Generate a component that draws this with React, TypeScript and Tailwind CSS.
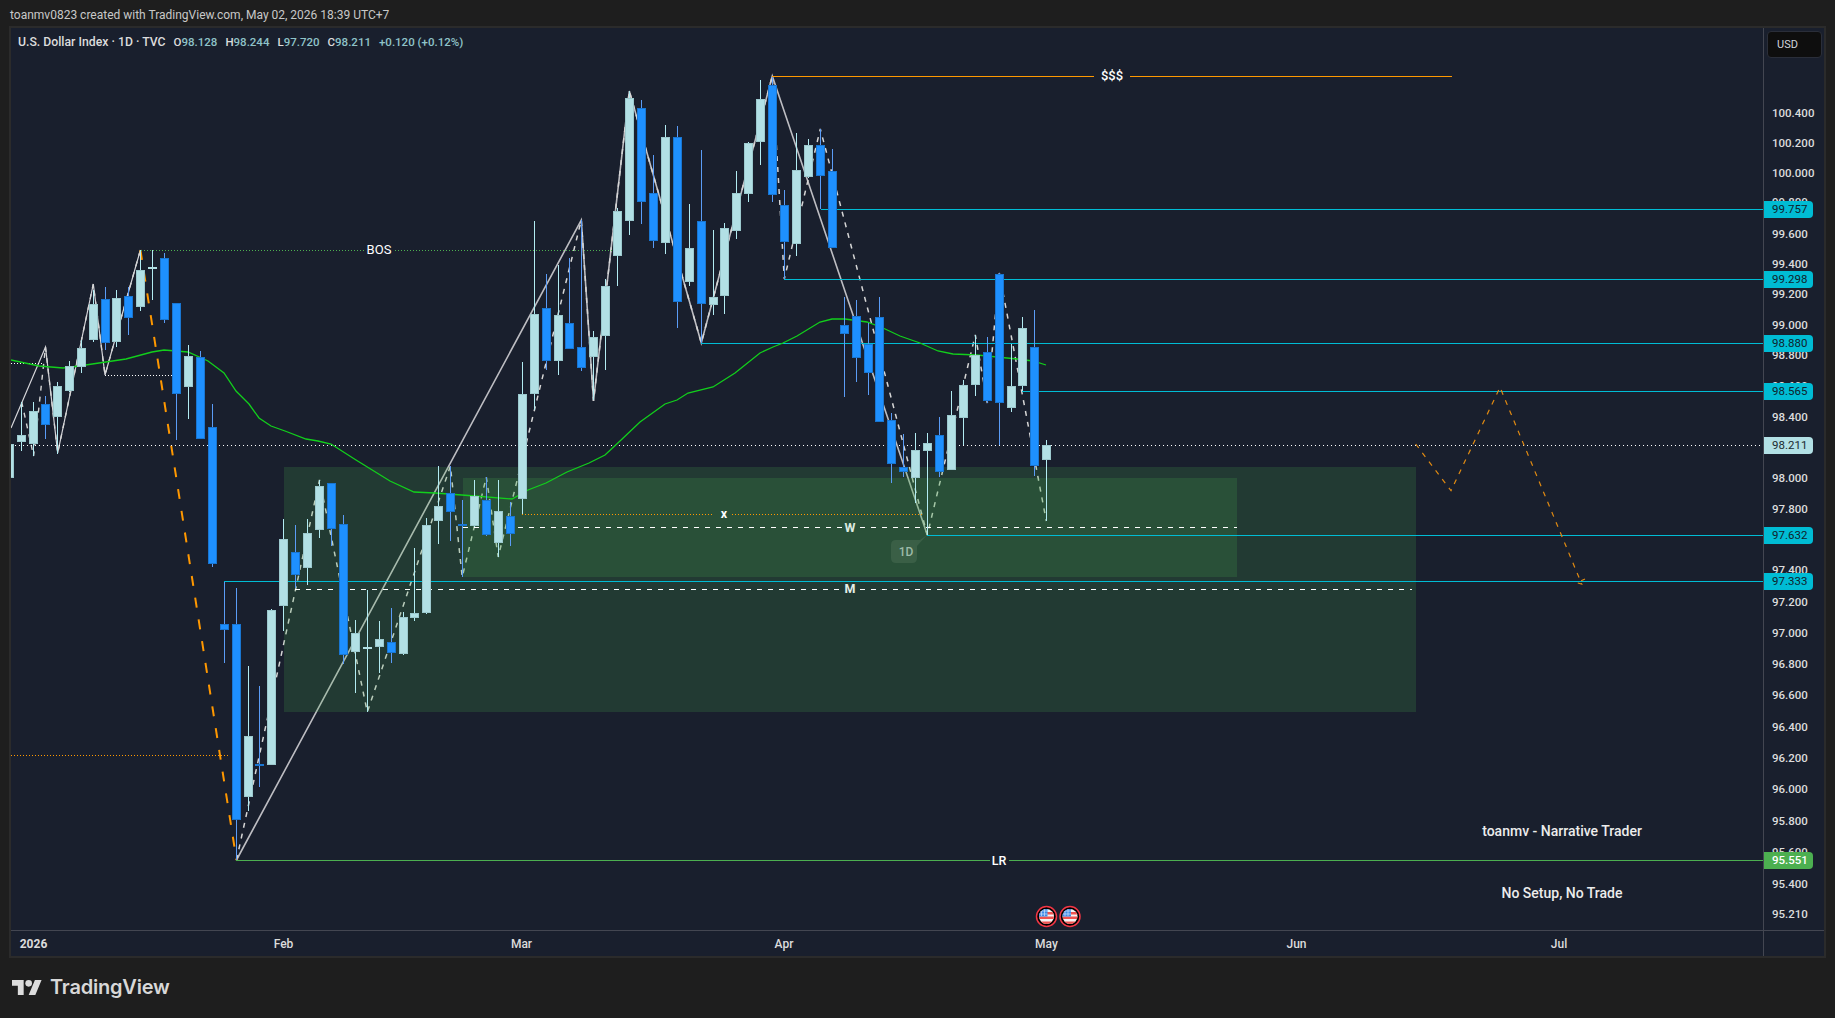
import React from 'react';

type Candle = [number, number, number, number, number, 'u' | 'd'];

// x, wick top, body top, body bottom, wick bottom, direction (page pixels)
const candles: Candle[] = [
  [9.5, 440, 444, 477, 480, 'u'],
  [21.7, 402, 435, 441, 451, 'u'],
  [33.2, 402, 411, 443, 456, 'u'],
  [45.5, 396, 404, 424, 439, 'd'],
  [57.3, 382, 386, 416, 454, 'u'],
  [69.2, 361, 366, 390, 392, 'u'],
  [81, 340, 348, 366, 373, 'u'],
  [93.3, 290, 304, 339, 342, 'u'],
  [105, 287, 299, 342, 350, 'd'],
  [116.6, 290, 298, 341, 347, 'u'],
  [128.5, 287, 296, 317, 335, 'd'],
  [140.4, 250, 270, 306, 311, 'u'],
  [152, 250, 267, 268, 300, 'u'],
  [164.5, 253, 258, 319, 323, 'd'],
  [176.4, 303, 303, 393, 440, 'd'],
  [188, 345, 356, 386, 419, 'u'],
  [200.5, 351, 357, 438, 438, 'd'],
  [212.3, 404, 427, 563, 567, 'd'],
  [224.2, 582, 624, 629, 663, 'd'],
  [236.5, 588, 624, 819, 860, 'd'],
  [248.3, 666, 736, 796, 811, 'u'],
  [259.8, 686, 764, 765, 787, 'd'],
  [271.3, 609, 610, 764, 764, 'u'],
  [283.5, 519, 539, 605, 631, 'u'],
  [295.4, 525, 552, 574, 588, 'd'],
  [307.2, 519, 533, 567, 585, 'u'],
  [319.5, 480, 486, 529, 538, 'u'],
  [331.4, 483, 483, 528, 546, 'd'],
  [343.2, 515, 524, 654, 664, 'd'],
  [355.5, 620, 633, 651, 693, 'u'],
  [367.3, 590, 647, 648, 712, 'u'],
  [379.2, 621, 639, 646, 673, 'u'],
  [391.4, 608, 642, 652, 663, 'd'],
  [403.3, 612, 617, 653, 655, 'u'],
  [414.4, 548, 613, 617, 621, 'u'],
  [426.2, 518, 525, 612, 614, 'u'],
  [438.5, 466, 506, 520, 544, 'u'],
  [450.4, 466, 493, 511, 541, 'd'],
  [462.2, 500, 524, 525, 577, 'd'],
  [474.5, 480, 496, 525, 527, 'u'],
  [486.3, 477, 500, 534, 536, 'd'],
  [498.2, 480, 511, 542, 557, 'u'],
  [510.5, 502, 516, 533, 546, 'd'],
  [522.3, 362, 394, 498, 514, 'u'],
  [534.2, 221, 314, 393, 410, 'u'],
  [546.4, 274, 308, 360, 370, 'd'],
  [558.3, 265, 315, 360, 375, 'u'],
  [569.4, 258, 323, 348, 349, 'd'],
  [581.3, 220, 347, 367, 371, 'd'],
  [593.5, 331, 337, 356, 400, 'u'],
  [605.3, 279, 286, 335, 370, 'u'],
  [617.3, 208, 211, 255, 286, 'u'],
  [629.3, 91, 98, 220, 235, 'u'],
  [641.3, 100, 108, 201, 224, 'd'],
  [653.3, 155, 193, 240, 248, 'd'],
  [665.3, 125, 137, 242, 254, 'u'],
  [677.3, 126, 137, 301, 328, 'd'],
  [689.3, 204, 248, 281, 286, 'u'],
  [701.3, 150, 221, 303, 343, 'd'],
  [713.3, 230, 297, 304, 315, 'u'],
  [724.3, 223, 228, 295, 314, 'u'],
  [736.3, 171, 193, 230, 239, 'u'],
  [748.3, 142, 143, 193, 202, 'u'],
  [760.3, 80, 99, 141, 165, 'u'],
  [772.3, 77, 85, 194, 202, 'd'],
  [784.3, 190, 205, 241, 279, 'd'],
  [796.3, 133, 170, 243, 256, 'u'],
  [808.3, 139, 145, 176, 178, 'u'],
  [820.3, 129, 145, 175, 209, 'd'],
  [832.3, 149, 171, 247, 247, 'd'],
  [844.3, 297, 325, 333, 397, 'd'],
  [856.3, 300, 316, 357, 382, 'd'],
  [868.3, 323, 344, 372, 395, 'd'],
  [879.3, 297, 317, 421, 422, 'd'],
  [891.3, 413, 420, 463, 483, 'd'],
  [903.3, 434, 467, 471, 477, 'd'],
  [915.3, 433, 450, 477, 503, 'u'],
  [927.3, 433, 443, 450, 535, 'u'],
  [939.3, 417, 435, 471, 477, 'd'],
  [951.3, 391, 415, 469, 469, 'u'],
  [963.3, 380, 385, 417, 445, 'u'],
  [975.3, 335, 355, 384, 396, 'u'],
  [987.3, 337, 352, 400, 403, 'd'],
  [999.3, 273, 274, 402, 445, 'd'],
  [1011.3, 344, 386, 407, 412, 'u'],
  [1022.3, 317, 328, 385, 391, 'u'],
  [1034.3, 310, 347, 465, 476, 'd'],
  [1046.3, 440, 445, 459, 521, 'u'],
];

const ma =
  '11,360 39,366 63,368 79,366 99,363 126,359 152,352 164,350 188,352 208,361 224,373 236,391 249,404 259,418 271,426 285,431 306,439 318,441 331,444 356,460 390,481 414,492 435,493 475,496 512,499 528,490 546,483 567,472 589,463 605,455 620,441 640,422 665,404 677,400 688,393 713,387 735,373 760,353 773,347 783,343 797,336 820,322 832,319 845,319 867,322 883,328 900,336 920,343 938,351 953,354 977,355 997,357 1017,359 1033,361 1046,365';

const solidZig =
  '11,428 45.5,347 57.7,453 93.3,284 105,375 140.4,250';
const solidZig2 =
  '236.5,860 581.3,220 593.5,401 629.3,91 701.3,343 772.3,76 927.3,535';
const dashZig =
  '21.7,402 33.6,456 45.5,347 57.7,453 93.3,284 105,375 140.4,250';
const dashZig2 =
  '236.5,860 319.5,480 367.3,712 450.4,466 462.2,577 486.3,477 498.2,557 581.3,220 593.5,401 629.3,91 701.3,343 772.3,76 784.3,279 820.3,129 927.3,535 975.3,335 987.3,403 999.3,273 1046.3,521';

const tealLines: [number, number][] = [
  [820.7, 209.5],
  [784.3, 279.5],
  [701.3, 343.5],
  [1021.7, 391.5],
  [927.3, 535.5],
  [224.2, 581.5],
];

const priceLabels: [string, number][] = [
  ['100.400', 112.7], ['100.200', 142.7], ['100.000', 172.7], ['99.800', 202], ['99.600', 233.7],
  ['99.400', 263.7], ['99.200', 293.7], ['99.000', 324.7], ['98.800', 355], ['98.600', 386],
  ['98.400', 416.7], ['98.000', 477.7], ['97.800', 508.7], ['97.400', 570.3], ['97.200', 601.7],
  ['97.000', 632.7], ['96.800', 663.7], ['96.600', 695.3], ['96.400', 726.7], ['96.200', 757.7],
  ['96.000', 789.3], ['95.800', 820.7], ['95.600', 851.7], ['95.400', 883.7], ['95.210', 913.7],
];

const priceTags: { text: string; y: number; kind: 'teal' | 'close' | 'green' }[] = [
  { text: '99.757', y: 209.5, kind: 'teal' },
  { text: '99.298', y: 279.5, kind: 'teal' },
  { text: '98.880', y: 343.5, kind: 'teal' },
  { text: '98.565', y: 391.5, kind: 'teal' },
  { text: '98.211', y: 445.5, kind: 'close' },
  { text: '97.632', y: 535.5, kind: 'teal' },
  { text: '97.333', y: 581.5, kind: 'teal' },
  { text: '95.551', y: 860.5, kind: 'green' },
];

const timeLabels: [string, number, boolean][] = [
  ['2026', 33.5, true],
  ['Feb', 283.5, false],
  ['Mar', 521.5, false],
  ['Apr', 784, false],
  ['May', 1046.5, false],
  ['Jun', 1296.5, false],
  ['Jul', 1559, false],
];

const Flag = ({ cx, id }: { cx: number; id: string }) => (
  <g>
    <clipPath id={id}>
      <circle cx={cx} cy={916.5} r={7.5} />
    </clipPath>
    <circle cx={cx} cy={916.5} r={10} fill="#000" stroke="#f23645" strokeWidth={1.5} />
    <g clipPath={`url(#${id})`}>
      <rect x={cx - 8} y={908} width={16} height={17} fill="#f4f4f4" />
      <rect x={cx - 8} y={912} width={16} height={2.5} fill="#ef5350" />
      <rect x={cx - 8} y={916.5} width={16} height={2.5} fill="#ef5350" />
      <rect x={cx - 8} y={921.5} width={16} height={4} fill="#ef5350" />
      <rect x={cx - 8} y={908} width={9} height={8.5} fill="#3d8be8" />
      <path d={`M${cx - 5} 909v7M${cx - 2} 909v7M${cx - 7} 911h8M${cx - 7} 914h8`} stroke="#cfe3fb" strokeWidth={0.7} />
    </g>
  </g>
);

const CandleMark = ({ c }: { c: Candle }) => {
  const [x, hi, top, bottom, lo, dir] = c;
  const cx = Math.floor(x) + 0.5;
  const up = dir === 'u';
  const doji = bottom - top <= 1;
  return (
    <g shapeRendering="crispEdges">
      <line x1={cx} x2={cx} y1={hi} y2={lo} stroke={up ? '#b2ebf2' : '#5b9cf6'} />
      {doji ? (
        <rect x={cx - 4.5} y={top} width={9} height={1.5} fill={up ? '#b2dfe4' : '#1976d2'} />
      ) : (
        <rect
          x={cx - 4}
          y={top + 0.5}
          width={8}
          height={bottom - top}
          fill={up ? '#b2e0e5' : '#1e90ff'}
          stroke={up ? '#9cc9ce' : '#1976d2'}
        />
      )}
    </g>
  );
};

const HLine = ({ x1, x2, y, color, dash }: { x1: number; x2: number; y: number; color: string; dash?: string }) => (
  <line x1={x1} x2={x2} y1={y} y2={y} stroke={color} strokeDasharray={dash} shapeRendering="crispEdges" />
);

const Note = ({ x, y, children, className }: { x: number; y: number; children: React.ReactNode; className: string }) => (
  <text x={x} y={y} textAnchor="middle" dominantBaseline="central" className={className}>
    {children}
  </text>
);

const ChartPane = () => (
  <svg viewBox="11 28 1752 902" width={1752} height={902} className="block">
    {/* drawings that sit under the zones */}
    <polyline points={solidZig} fill="none" stroke="#d6d6da" strokeWidth={1.2} />
    <polyline points={solidZig2} fill="none" stroke="#bdbdc2" strokeWidth={1.6} />
    <polyline points={dashZig} fill="none" stroke="#d6d6d6" strokeWidth={1.4} strokeDasharray="5 6" />
    <polyline points={dashZig2} fill="none" stroke="#d6d6d6" strokeWidth={1.5} strokeDasharray="5 6" />
    <line x1={140.4} y1={250} x2={236.5} y2={860} stroke="#ff9800" strokeWidth={2} strokeDasharray="10 12" />

    {/* zones */}
    <rect x={284} y={467} width={1132} height={245} fill="#4caf50" fillOpacity={0.19} />
    <rect x={463} y={478} width={774} height={99} fill="#4caf50" fillOpacity={0.19} />

    {/* levels */}
    <HLine x1={141} x2={364} y={250.5} color="#4caf50" dash="1 2" />
    <HLine x1={395} x2={613} y={250.5} color="#4caf50" dash="1 2" />
    <HLine x1={11} x2={42} y={363.5} color="#ffffff" dash="1 2" />
    <HLine x1={105} x2={172} y={375.5} color="#ffffff" dash="1 2" />
    <HLine x1={11} x2={1763} y={445.5} color="#ffffff" dash="1 3" />
    <HLine x1={11} x2={230} y={755.5} color="#ff9800" dash="1 2" />
    <HLine x1={522} x2={714} y={514.5} color="#ff9800" dash="1 2" />
    <HLine x1={732} x2={923} y={514.5} color="#ff9800" dash="1 2" />
    <HLine x1={463} x2={842} y={527.5} color="#ffffff" dash="5 6" />
    <HLine x1={860} x2={1237} y={527.5} color="#ffffff" dash="5 6" />
    <HLine x1={295} x2={841} y={589.5} color="#ffffff" dash="5 6" />
    <HLine x1={860} x2={1412} y={589.5} color="#ffffff" dash="5 6" />
    {tealLines.map(([x, y]) => (
      <HLine key={y} x1={x} x2={1763} y={y} color="#00bcd4" />
    ))}
    <HLine x1={772} x2={1094} y={76.5} color="#ff9800" />
    <HLine x1={1130} x2={1452} y={76.5} color="#ff9800" />
    <HLine x1={236} x2={990} y={860.5} color="#4caf50" />
    <HLine x1={1009} x2={1763} y={860.5} color="#4caf50" />

    <polyline points={ma} fill="none" stroke="#12cf1c" strokeWidth={1.3} />

    {/* projected path */}
    <polyline
      points="1415.7,444 1451,490.7 1500,387.3 1581.7,584 1576.7,582.7 1585,579"
      fill="none"
      stroke="#e08a12"
      strokeWidth={1.2}
      strokeDasharray="5 6"
    />

    {candles.map(c => (
      <CandleMark key={c[0]} c={c} />
    ))}

    <path d="M927 535 L917 546 V558 Q917 563 912 563 H896 Q891 563 891 558 V545 Q891 540 896 540 H920 Z" fill="#3a5f46" />
    <Note x={906} y={552} className="fill-[#9dbba8] text-[12px] font-medium">1D</Note>
    <Note x={379} y={249} className="fill-white text-[13px]">BOS</Note>
    <Note x={1112} y={75} className="fill-white text-[13px] font-medium">$$$</Note>
    <Note x={724} y={513} className="fill-white text-[12.5px] font-bold">x</Note>
    <Note x={850} y={527} className="fill-[#dcebe0] text-[12.5px] font-bold">W</Note>
    <Note x={850} y={588} className="fill-[#e4eee7] text-[12.5px] font-bold">M</Note>
    <Note x={999} y={860} className="fill-white text-[12.5px] font-medium">LR</Note>
    <Note x={1562} y={831} className="fill-[#ececec] text-[14px] font-medium">toanmv - Narrative Trader</Note>
    <Note x={1562} y={893} className="fill-[#ececec] text-[14px] font-medium">No Setup, No Trade</Note>

    <Flag cx={1046.5} id="flag-a" />
    <Flag cx={1070} id="flag-b" />
  </svg>
);

const Legend = () => (
  <div className="absolute left-[7px] top-[6px] flex items-baseline gap-2 text-[11.5px] leading-4 font-medium whitespace-nowrap text-[#dcdcdc]">
    <span className="text-[12.25px]">U.S. Dollar Index · 1D · TVC</span>
    <span>O<span className="text-[#8fc3c8]">98.128</span></span>
    <span>H<span className="text-[#8fc3c8]">98.244</span></span>
    <span>L<span className="text-[#8fc3c8]">97.720</span></span>
    <span>C<span className="text-[#8fc3c8]">98.211</span></span>
    <span className="text-[#8fc3c8]">+0.120 (+0.12%)</span>
  </div>
);

const PriceAxis = () => (
  <div className="relative flex-1 border-l border-[#434651]">
    <div className="absolute left-[3px] top-[3px] w-[55px] h-[27px] rounded border border-[#2a2e39] bg-[#0e0e0e] pl-[9px] text-[11px] leading-[25px] text-[#d1d4dc]">
      USD
    </div>
    {priceLabels.map(([text, y]) => (
      <span
        key={text}
        className="absolute left-[8px] text-[11.5px] leading-4 font-medium text-[#dcdcdc]"
        style={{ top: y - 28 - 8 }}
      >
        {text}
      </span>
    ))}
    {priceTags.map(t => (
      <span
        key={t.text}
        className={
          'absolute left-0 w-[49px] h-[17px] rounded-r-sm pl-[8px] text-[11.5px] leading-[17px] ' +
          (t.kind === 'teal'
            ? 'bg-[#00bcd4] text-[#10222c]'
            : t.kind === 'close'
              ? 'bg-[#b2e0e5] text-[#1a2a30]'
              : 'bg-[#4caf50] text-white font-medium')
        }
        style={{ top: t.y - 28 - 8.5 }}
      >
        {t.text}
      </span>
    ))}
  </div>
);

const TimeAxis = () => (
  <div className="flex h-[27px] border-t border-[#434651]">
    <div className="relative w-[1752px]">
      {timeLabels.map(([text, x, strong]) => (
        <span
          key={text}
          className={
            'absolute top-[5px] -translate-x-1/2 text-[12px] leading-4 text-[#dcdcdc] ' +
            (strong ? 'font-bold' : 'font-medium')
          }
          style={{ left: x - 11 }}
        >
          {text}
        </span>
      ))}
    </div>
    <div className="flex-1 border-l border-[#434651]" />
  </div>
);

export default function App() {
  return (
    <div className="flex flex-col w-[1835px] h-[1018px] overflow-hidden bg-[#1e1e1e] font-['Roboto',sans-serif]">
      <div className="h-[26px] pl-[10px] pt-[7px] text-[12px] leading-4 text-[#c8c8c8]">
        toanmv0823 created with TradingView.com, May 02, 2026 18:39 UTC+7
      </div>
      <div className="flex flex-col ml-[9px] w-[1817px] h-[932px] border-2 border-[#2b2b2b] bg-[#191f2d]">
        <div className="flex h-[902px]">
          <div className="relative w-[1752px] overflow-hidden">
            <ChartPane />
            <Legend />
          </div>
          <PriceAxis />
        </div>
        <TimeAxis />
      </div>
      <div className="flex items-center gap-2 pl-3 pt-[17px]">
        <svg viewBox="0 4 36 18" width={30} height={15} fill="#dcdcdc">
          <path d="M14 22H7V11H0V4h14v18zM28 22h-8l7.5-18h8L28 22z" />
          <circle cx={20} cy={8} r={4} />
        </svg>
        <span className="font-['Inter'] text-[20px] leading-6 font-semibold tracking-[-0.2px] text-[#d8d8d8]">TradingView</span>
      </div>
    </div>
  );
}
